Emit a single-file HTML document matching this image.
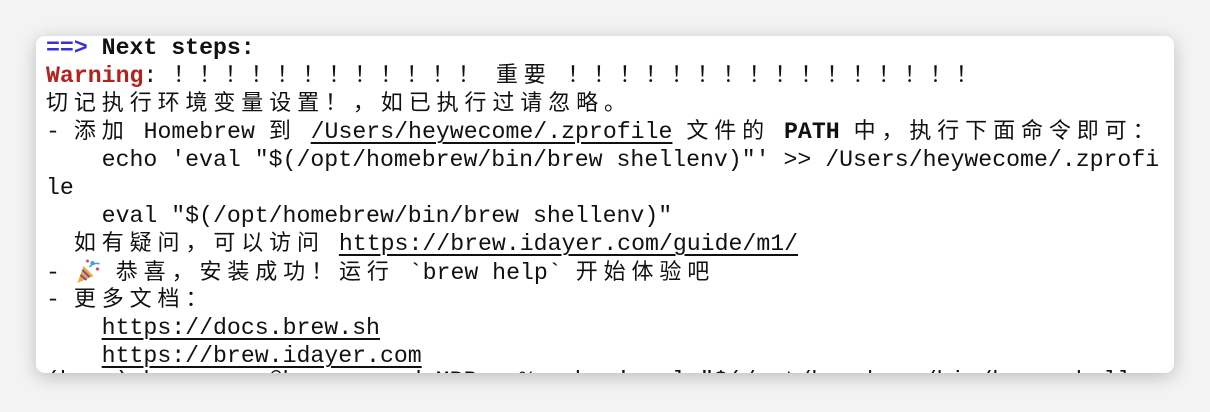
<!DOCTYPE html>
<html><head><meta charset="utf-8"><style>
html,body{margin:0;padding:0}
body{width:1210px;height:412px;background:#f3f3f3;position:relative;overflow:hidden}
.panel{position:absolute;left:36px;top:36px;width:1138px;height:337px;background:#fff;border-radius:9px;box-shadow:0 4px 18px rgba(0,0,0,.22);overflow:hidden}
.row{position:absolute;left:10px;height:28px;line-height:28px;white-space:pre;font-family:"Liberation Mono",monospace;font-size:23.2px;color:#111}
.c{font-family:"Noto Sans CJK SC",sans-serif;font-size:22px;letter-spacing:5.9px;line-height:18px}
.b{font-weight:bold}
.u{text-decoration:underline;text-decoration-thickness:2px;text-underline-offset:4px}
.ex{display:inline-block;width:25.9px;text-align:center;font-family:"Noto Sans CJK SC",sans-serif;font-size:22px;line-height:18px}
</style></head><body>
<div class="panel">
<div class="row b" style="top:-2px"><span style="color:#3a2fe0">==&gt;</span> Next steps:</div>
<div class="row" style="top:26px"><span class="b" style="color:#b3231c">Warning</span>: <span class="ex">！</span><span class="ex">！</span><span class="ex">！</span><span class="ex">！</span><span class="ex">！</span><span class="ex">！</span><span class="ex">！</span><span class="ex">！</span><span class="ex">！</span><span class="ex">！</span><span class="ex">！</span><span class="ex">！</span> <span class="c">重要</span> <span class="ex">！</span><span class="ex">！</span><span class="ex">！</span><span class="ex">！</span><span class="ex">！</span><span class="ex">！</span><span class="ex">！</span><span class="ex">！</span><span class="ex">！</span><span class="ex">！</span><span class="ex">！</span><span class="ex">！</span><span class="ex">！</span><span class="ex">！</span><span class="ex">！</span><span class="ex">！</span></div>
<div class="row" style="top:54px"><span class="c">切记执行环境变量设置！，如已执行过请忽略。</span></div>
<div class="row" style="top:82px">- <span class="c">添加</span> Homebrew <span class="c">到</span> <span class="u">/Users/heywecome/.zprofile</span> <span class="c">文件的</span> <span class="b">PATH</span> <span class="c">中，执行下面命令即可：</span></div>
<div class="row" style="top:110px">    echo 'eval "$(/opt/homebrew/bin/brew shellenv)"' &gt;&gt; /Users/heywecome/.zprofi</div>
<div class="row" style="top:138px">le</div>
<div class="row" style="top:166px">    eval "$(/opt/homebrew/bin/brew shellenv)"</div>
<div class="row" style="top:194px">  <span class="c">如有疑问，可以访问</span> <span class="u">https://brew.idayer.com/guide/m1/</span></div>
<div class="row" style="top:222px">- <svg width="28" height="26" viewBox="0 0 27 26" style="vertical-align:-5px"><path d="M3 25 L9 8 L19 18 Z" fill="#e9b12a"/><path d="M6 17 L12 22 M8 12 L15 19" stroke="#8a3fc4" stroke-width="2"/><circle cx="18" cy="5" r="2" fill="#3aa0e8"/><circle cx="23" cy="11" r="1.6" fill="#e0446a"/><circle cx="13" cy="3" r="1.5" fill="#e0446a"/><path d="M15 9 Q20 4 25 6" stroke="#3aa0e8" stroke-width="1.5" fill="none"/></svg> <span class="c">恭喜，安装成功！运行</span> `brew help` <span class="c">开始体验吧</span></div>
<div class="row" style="top:250px">- <span class="c">更多文档：</span></div>
<div class="row" style="top:278px">    <span class="u">https://docs.brew.sh</span></div>
<div class="row" style="top:306px">    <span class="u">https://brew.idayer.com</span></div>
<div class="row" style="top:331px">(base) heywecome@heywecomedeMBP ~ % echo 'eval "$(/opt/homebrew/bin/brew shellenv)"' &gt;&gt;</div>
</div>
</body></html>
